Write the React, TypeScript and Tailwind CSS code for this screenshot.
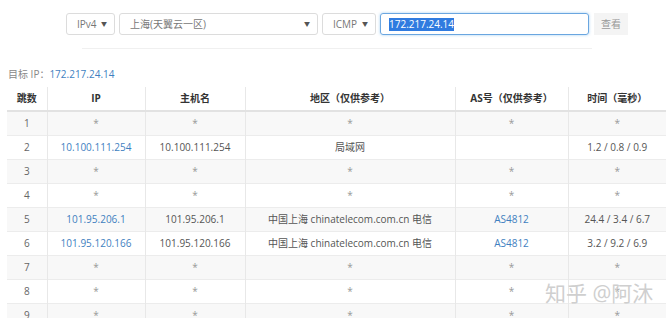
import React from "react"

const font = { fontFamily: '"Open Sans", "Noto Sans CJK SC", sans-serif' }

type Row = {
  hop: number
  ip?: string
  host?: string
  region?: string
  as?: string
  time?: string
}

const rows: Row[] = [
  { hop: 1 },
  { hop: 2, ip: "10.100.111.254", host: "10.100.111.254", region: "局域网", as: "", time: "1.2 / 0.8 / 0.9" },
  { hop: 3 },
  { hop: 4 },
  { hop: 5, ip: "101.95.206.1", host: "101.95.206.1", region: "中国上海 chinatelecom.com.cn 电信", as: "AS4812", time: "24.4 / 3.4 / 6.7" },
  { hop: 6, ip: "101.95.120.166", host: "101.95.120.166", region: "中国上海 chinatelecom.com.cn 电信", as: "AS4812", time: "3.2 / 9.2 / 6.9" },
  { hop: 7 },
  { hop: 8 },
  { hop: 9 },
]

const Select = ({ label, className }: { label: string; className: string }) => (
  <div
    className={`flex h-[22px] items-center justify-between rounded-[3px] border border-[#dcdcdc] bg-white pl-[10px] pr-[7px] text-[10px] text-[#777] ${className}`}
  >
    <span>{label}</span>
    <span className="text-[6px] text-[#555]">▼</span>
  </div>
)

const Star = () => <span className="text-[#999]">*</span>

export default function App() {
  const cell = "border-r border-[#e8e8e8] text-center last:border-r-0"
  return (
    <div className="relative h-[318px] w-[667px] overflow-hidden bg-white" style={font}>
      <div className="flex gap-[4px] pl-[66px] pt-[13px]">
        <Select label="IPv4" className="w-[49px]" />
        <Select label="上海(天翼云一区)" className="w-[199px]" />
        <Select label="ICMP" className="w-[54px]" />
        <div className="flex h-[22px] w-[209px] items-center rounded-[3px] border border-[#6aa6e0] pl-[8px] shadow-[0_0_3px_rgba(102,175,233,0.6)]">
          <span className="bg-[#2f7be0] text-[10px] leading-[13px] text-white">172.217.24.14</span>
        </div>
        <div className="ml-[1px] flex h-[22px] w-[34px] items-center justify-center bg-[#f4f4f4] text-[10px] text-[#999]">
          查看
        </div>
      </div>
      <div className="ml-[82px] mt-[13px] h-px w-[510px] bg-[#f0f0f0]" />
      <div className="ml-[8px] mt-[19px] text-[10px] leading-[12px]">
        <span className="text-[#888]">目标 IP：</span>
        <span className="text-[#3f7fbf]">172.217.24.14</span>
      </div>
      <table className="ml-[7px] mt-[7px] w-[659px] table-fixed border-collapse text-[10px]">
        <colgroup>
          <col className="w-[40px]" />
          <col className="w-[98px]" />
          <col className="w-[100px]" />
          <col className="w-[210px]" />
          <col className="w-[113px]" />
          <col className="w-[98px]" />
        </colgroup>
        <thead>
          <tr className="h-[24px] border-b-2 border-[#e2e2e2] font-bold text-[#333]">
            <th className={cell}>跳数</th>
            <th className={cell}>IP</th>
            <th className={cell}>主机名</th>
            <th className={cell}>地区（仅供参考）</th>
            <th className={cell}>AS号（仅供参考）</th>
            <th className={cell}>时间（毫秒）</th>
          </tr>
        </thead>
        <tbody>
          {rows.map((r) => (
            <tr
              key={r.hop}
              className={`h-[24px] border-b border-[#ececec] text-[#555] ${r.hop % 2 === 1 ? "bg-[#f8f8f8]" : "bg-white"}`}
            >
              <td className={`${cell} text-[#666]`}>{r.hop}</td>
              <td className={`${cell} text-[#3f7fbf]`}>{r.ip ?? <Star />}</td>
              <td className={cell}>{r.host ?? <Star />}</td>
              <td className={cell}>{r.region ?? <Star />}</td>
              <td className={`${cell} text-[#3f7fbf]`}>{r.as ?? <Star />}</td>
              <td className={cell}>{r.time ?? <Star />}</td>
            </tr>
          ))}
        </tbody>
      </table>
      <div className="pointer-events-none absolute left-[545px] top-[280px] text-[21px] leading-[26px] text-[#cfcfcf]">
        知乎 @阿沐
      </div>
    </div>
  )
}
